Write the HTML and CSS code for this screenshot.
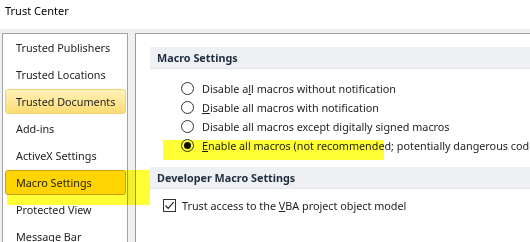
FILE: index.html
```html
<!DOCTYPE html>
<html>
<head>
<meta charset="utf-8">
<link rel="stylesheet" href="styles.css">
</head>
<body>
<div class="dialog">
  <div class="titlebar">Trust Center</div>
  <div class="main">
    <nav class="nav">
      <div class="nav-item">Trusted Publishers</div>
      <div class="nav-item">Trusted Locations</div>
      <div class="nav-item hover">Trusted Documents</div>
      <div class="nav-item">Add-ins</div>
      <div class="nav-item">ActiveX Settings</div>
      <div class="nav-item selected">Macro Settings</div>
      <div class="nav-item">Protected View</div>
      <div class="nav-item">Message Bar</div>
    </nav>
    <section class="content">
      <div class="section-head">Macro Settings</div>
      <div class="options">
        <div class="option"><span class="radio"></span><span>Disable a<u>l</u>l macros without notification</span></div>
        <div class="option"><span class="radio"></span><span><u>D</u>isable all macros with notification</span></div>
        <div class="option"><span class="radio"></span><span>Disable all macros except di<u>g</u>itally signed macros</span></div>
        <div class="option"><span class="radio checked"></span><span><u>E</u>nable all macros (not recommended; potentially dangerous code can be run)</span></div>
      </div>
      <div class="section-head dev">Developer Macro Settings</div>
      <div class="check-row">
        <span class="checkbox"><svg width="11" height="11" viewBox="0 0 11 11"><path d="M1.5 5.5 L4.2 8.3 L9.6 2.2" fill="none" stroke="#222" stroke-width="1.2"/></svg></span>
        <span>Trust access to the <u>V</u>BA project object model</span>
      </div>
    </section>
  </div>
  <div class="marker marker-nav"></div>
  <div class="marker marker-opt"></div>
</div>
</body>
</html>
```
FILE: styles.css
```css
html, body {
  margin: 0;
  padding: 0;
  overflow: hidden;
}
body {
  width: 530px;
  height: 242px;
  background: #f0f0f0;
  font-family: "Noto Sans", "Open Sans", sans-serif;
  font-size: 10.8px;
  color: #1e1e1e;
}
.dialog {
  position: relative;
  width: 530px;
  height: 242px;
  overflow: hidden;
}
.titlebar {
  height: 29px;
  background: #ffffff;
  padding-left: 5px;
  line-height: 22px;
  font-size: 11px;
  color: #000;
}
.main {
  display: flex;
  gap: 7px;
  padding-top: 4px;
  padding-left: 2px;
  width: 700px;
}
.nav {
  width: 124px;
  height: 240px;
  background: #fff;
  border: 1px solid #a3a3a3;
  padding-top: 1px;
  display: flex;
  flex-direction: column;
  gap: 2px;
}
.nav-item {
  height: 25px;
  line-height: 24px;
  margin: 0 1px 0 2px;
  padding-left: 10px;
  border: 1px solid transparent;
  border-radius: 3px;
  box-sizing: border-box;
  color: #222;
  white-space: nowrap;
}
.nav-item.hover {
  background: linear-gradient(#fff1b8, #fddc74);
  border-color: #efd27a;
}
.nav-item.selected {
  background: #ffd400;
  border-color: #c9a035;
}
.content {
  flex: 1;
  height: 240px;
  background: #fff;
  border: 1px solid #9d9d9d;
  padding-top: 13px;
  padding-left: 14px;
}
.section-head {
  height: 21px;
  line-height: 21px;
  background: #eef0f4;
  border-bottom: 1px solid #e3e6eb;
  padding-left: 7px;
  font-weight: bold;
  color: #1f2b3e;
}
.section-head.dev {
  margin-top: 12px;
}
.options {
  margin-top: 10px;
  padding-left: 31px;
}
.option {
  height: 19px;
  display: flex;
  align-items: center;
  gap: 8px;
  white-space: nowrap;
}
.radio {
  width: 11px;
  height: 11px;
  border: 1px solid #333;
  border-radius: 50%;
  background: #fff;
  flex: none;
  position: relative;
}
.radio.checked::after {
  content: "";
  position: absolute;
  left: 2px;
  top: 2px;
  width: 7px;
  height: 7px;
  border-radius: 50%;
  background: #111;
}
.check-row {
  margin-top: 7px;
  padding-left: 13px;
  height: 19px;
  display: flex;
  align-items: center;
  gap: 6px;
  white-space: nowrap;
}
.checkbox {
  width: 13px;
  height: 13px;
  border: 1px solid #333;
  box-sizing: border-box;
  display: flex;
  align-items: center;
  justify-content: center;
  flex: none;
}
.marker {
  position: absolute;
  background: #ffff33;
  mix-blend-mode: multiply;
}
.marker-nav {
  left: 7px;
  top: 170px;
  width: 143px;
  height: 35px;
}
.marker-opt {
  left: 163px;
  top: 140px;
  width: 221px;
  height: 20px;
}
```
